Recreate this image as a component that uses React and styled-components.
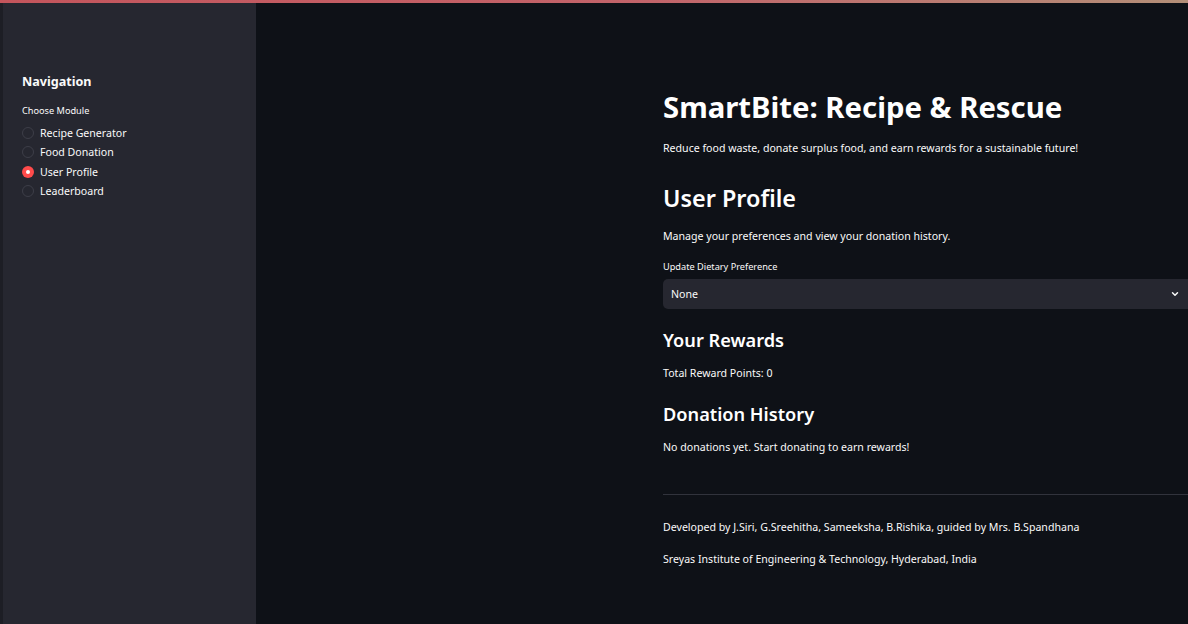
import React from 'react';
import styled, { createGlobalStyle } from 'styled-components';

const Global = createGlobalStyle`
html, body {
  margin: 0;
  padding: 0;
  background: #0e1117;
  overflow: hidden;
}
* { box-sizing: border-box; }
`;

const Page = styled.div`
display: flex;
flex-flow: column;
width: 100vw;
height: 100vh;
font-family: 'Source Sans Pro', 'Noto Sans', sans-serif;
color: #fafafa;
`;

const DecorBar = styled.div`
height: 3px;
flex-shrink: 0;
background: linear-gradient(to right, #c4555c 0%, #c2646a 55%, #b38f78 100%);
`;

const Body = styled.div`
display: flex;
flex-flow: row;
flex: 1;
min-height: 0;
`;

const Sidebar = styled.div`
width: 256px;
flex-shrink: 0;
background: #262730;
border-left: 3px solid #1d1e25;
padding: 69px 0 0 19px;
display: flex;
flex-flow: column;
`;

const SideTitle = styled.div`
font-size: 12.6px;
font-weight: 700;
line-height: 20px;
`;

const SideLabel = styled.div`
font-size: 9.2px;
line-height: 14px;
margin-top: 12px;
`;

const RadioList = styled.div`
display: flex;
flex-flow: column;
margin-top: 5px;
`;

const RadioRow = styled.label`
display: flex;
flex-flow: row;
align-items: center;
gap: 6px;
height: 19.5px;
font-size: 10.6px;
`;

const RadioDot = styled.span`
width: 12px;
height: 12px;
border-radius: 50%;
display: flex;
align-items: center;
justify-content: center;
border: ${p => (p.$on ? 'none' : '1px solid #3d3e48')};
background: ${p => (p.$on ? '#ff4b4b' : 'transparent')};
&::after {
  content: '';
  width: 4px;
  height: 4px;
  border-radius: 50%;
  background: #ffffff;
  display: ${p => (p.$on ? 'block' : 'none')};
}
`;

const Main = styled.div`
flex: 1;
min-width: 0;
padding: 86px 0 0 407px;
display: flex;
flex-flow: column;
`;

const Title = styled.h1`
margin: 0;
font-size: 29.3px;
line-height: 36px;
font-weight: 700;
color: #ffffff;
`;

const Heading = styled.h2`
margin: ${p => p.$top}px 0 0;
font-size: ${p => p.$size}px;
line-height: ${p => p.$lh}px;
font-weight: 600;
color: #ffffff;
`;

const Text = styled.p`
margin: ${p => p.$top}px 0 0;
font-size: 10.6px;
line-height: 16px;
`;

const FieldLabel = styled.div`
margin-top: 16px;
font-size: 9.2px;
line-height: 14px;
`;

const Select = styled.div`
margin-top: 5px;
height: 30px;
background: #262730;
border-radius: 5px 0 0 5px;
display: flex;
flex-flow: row;
align-items: center;
justify-content: space-between;
padding: 0 8px 0 8px;
font-size: 10.6px;
`;

const Rule = styled.hr`
margin: 39px 0 0;
border: none;
border-top: 1px solid #31333c;
`;

const Chevron = () => (
  <svg width="10" height="10" viewBox="0 0 24 24" fill="none" stroke="#fafafa" strokeWidth="3.5" strokeLinecap="round" strokeLinejoin="round">
    <path d="M6 9l6 6 6-6" />
  </svg>
);

const modules = ['Recipe Generator', 'Food Donation', 'User Profile', 'Leaderboard'];

const App = () => (
  <Page>
    <Global />
    <DecorBar />
    <Body>
      <Sidebar>
        <SideTitle>Navigation</SideTitle>
        <SideLabel>Choose Module</SideLabel>
        <RadioList>
          {modules.map(m => (
            <RadioRow key={m}>
              <RadioDot $on={m === 'User Profile'} />
              {m}
            </RadioRow>
          ))}
        </RadioList>
      </Sidebar>
      <Main>
        <Title>SmartBite: Recipe &amp; Rescue</Title>
        <Text $top={15}>Reduce food waste, donate surplus food, and earn rewards for a sustainable future!</Text>
        <Heading $top={27} $size={23.4} $lh={30}>User Profile</Heading>
        <Text $top={15}>Manage your preferences and view your donation history.</Text>
        <FieldLabel>Update Dietary Preference</FieldLabel>
        <Select>
          <span>None</span>
          <Chevron />
        </Select>
        <Heading $top={19} $size={18.2} $lh={24}>Your Rewards</Heading>
        <Text $top={13}>Total Reward Points: 0</Text>
        <Heading $top={21} $size={18.2} $lh={24}>Donation History</Heading>
        <Text $top={13}>No donations yet. Start donating to earn rewards!</Text>
        <Rule />
        <Text $top={24}>Developed by J.Siri, G.Sreehitha, Sameeksha, B.Rishika, guided by Mrs. B.Spandhana</Text>
        <Text $top={16}>Sreyas Institute of Engineering &amp; Technology, Hyderabad, India</Text>
      </Main>
    </Body>
  </Page>
);

export default App;
